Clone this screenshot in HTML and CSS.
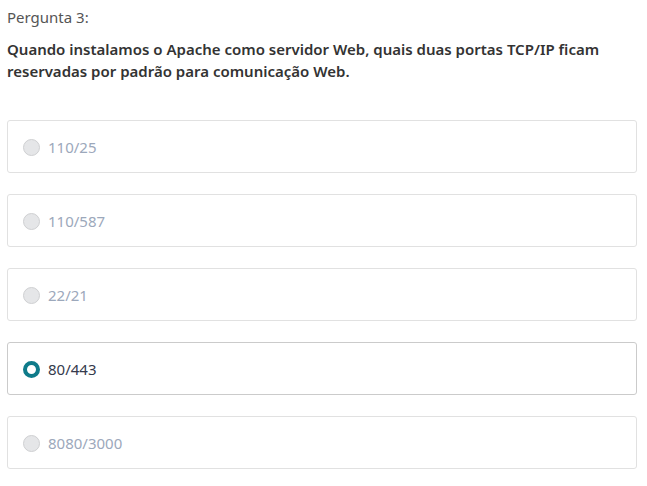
FILE: index.html
```html
<!DOCTYPE html>
<html lang="pt">
<head>
<meta charset="utf-8">
<link rel="stylesheet" href="styles.css">
</head>
<body>
<div class="quiz">
  <div class="label">Pergunta 3:</div>
  <div class="question">Quando instalamos o Apache como servidor Web, quais duas portas TCP/IP ficam reservadas por padrão para comunicação Web.</div>
  <div class="options">
    <label class="option"><span class="radio"></span><span class="text">110/25</span></label>
    <label class="option"><span class="radio"></span><span class="text">110/587</span></label>
    <label class="option"><span class="radio"></span><span class="text">22/21</span></label>
    <label class="option selected"><span class="radio"></span><span class="text">80/443</span></label>
    <label class="option"><span class="radio"></span><span class="text">8080/3000</span></label>
  </div>
</div>
</body>
</html>
```
FILE: styles.css
```css
html, body {
  margin: 0;
  padding: 0;
  background: #fff;
}
body {
  font-family: "Noto Sans", "Open Sans", sans-serif;
  font-size: 15px;
  color: #333;
}
.quiz {
  padding: 7px 10px 0 7px;
}
.label {
  color: #555;
  line-height: 20px;
}
.question {
  margin-top: 11px;
  font-size: 15px;
  font-weight: 600;
  line-height: 22px;
  color: #333;
}
.options {
  margin-top: 38px;
  display: flex;
  flex-direction: column;
  gap: 21px;
}
.option {
  display: flex;
  align-items: center;
  gap: 8px;
  height: 53px;
  box-sizing: border-box;
  border: 1px solid #e1e1e1;
  border-radius: 3px;
  padding: 1px 16px 0 15px;
  color: #9ca8bb;
}
.radio {
  width: 17px;
  height: 17px;
  box-sizing: border-box;
  border-radius: 50%;
  background: #e5e6e8;
  border: 1px solid #cfd0d2;
}
.option.selected {
  border-color: #cbcbcb;
  color: #353a4c;
}
.option.selected .radio {
  background: #fff;
  border: 4.5px solid #0f7b8a;
}
```
